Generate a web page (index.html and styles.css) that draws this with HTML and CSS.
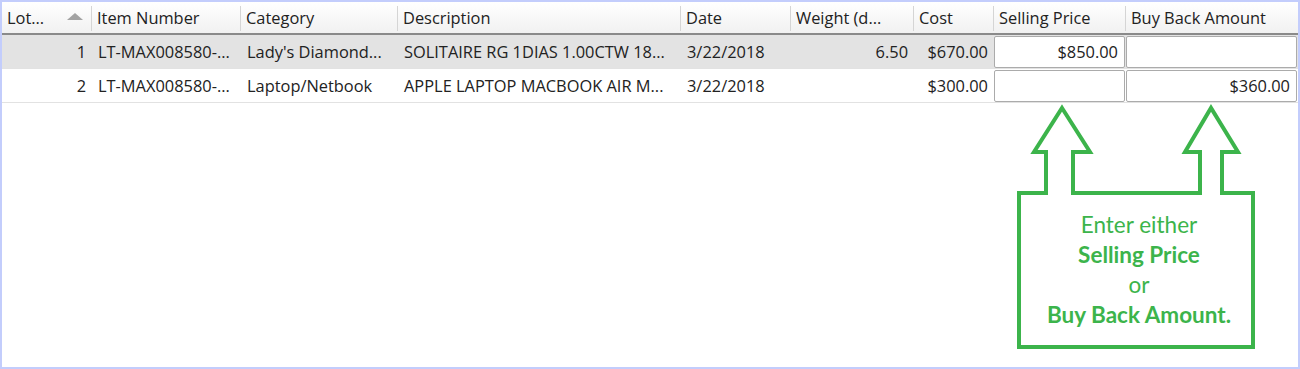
FILE: index.html
```html
<!DOCTYPE html>
<html lang="en">
<head>
    <meta charset="UTF-8">
    <title>Lot Items</title>
    <link rel="stylesheet" href="styles.css">
</head>
<body>
    <div class="frame">
        <div class="grid">
            <div class="head">
                <div class="hcell">Lot...<span class="sort"></span></div>
                <div class="hcell">Item Number</div>
                <div class="hcell">Category</div>
                <div class="hcell">Description</div>
                <div class="hcell">Date</div>
                <div class="hcell">Weight (d...</div>
                <div class="hcell">Cost</div>
                <div class="hcell">Selling Price</div>
                <div class="hcell last">Buy Back Amount</div>
            </div>
            <div class="row selected">
                <div class="cell num">1</div>
                <div class="cell">LT-MAX008580-...</div>
                <div class="cell">Lady's Diamond...</div>
                <div class="cell">SOLITAIRE RG 1DIAS 1.00CTW 18...</div>
                <div class="cell">3/22/2018</div>
                <div class="cell num">6.50</div>
                <div class="cell num">$670.00</div>
                <div class="cell edit"><div class="box">$850.00</div></div>
                <div class="cell edit"><div class="box"></div></div>
            </div>
            <div class="row">
                <div class="cell num">2</div>
                <div class="cell">LT-MAX008580-...</div>
                <div class="cell">Laptop/Netbook</div>
                <div class="cell">APPLE LAPTOP MACBOOK AIR M...</div>
                <div class="cell">3/22/2018</div>
                <div class="cell num"></div>
                <div class="cell num">$300.00</div>
                <div class="cell edit"><div class="box"></div></div>
                <div class="cell edit"><div class="box">$360.00</div></div>
            </div>
        </div>

        <!-- callout drawn over the grid -->
        <div class="callout">
            <svg width="250" height="250" viewBox="1014 104 250 250">
                <path d="M1062 108 L1090 152 L1073 152 L1073 193 L1200 193 L1200 152 L1185 152 L1211 108 L1238 152 L1222 152 L1222 193 L1253 193 L1253 347 L1019 347 L1019 193 L1046 193 L1046 152 L1034 152 Z"
                      fill="none" stroke="#3cb44b" stroke-width="4" stroke-linejoin="miter"/>
            </svg>
            <div class="note">
                <p>Enter either</p>
                <p class="b">Selling Price</p>
                <p>or</p>
                <p class="b">Buy Back Amount.</p>
            </div>
        </div>
    </div>
</body>
</html>
```

FILE: styles.css
```css
body {
    margin: 0;
    padding: 0;
    font-family: 'Open Sans', sans-serif;
    background-color: white;
}
.frame {
    position: relative;
    height: 369px;
    box-sizing: border-box;
    border: 2px solid #c3cdfc;
    background-color: white;
}
.grid {
    color: #222;
    font-size: 16.4px;
}
.head, .row {
    display: grid;
    grid-template-columns: 90px 149px 157px 283px 110px 123px 80px 132px 172px;
}
.head {
    height: 31px;
    background: linear-gradient(#ffffff, #f1f1f1);
    border-bottom: 2px solid #8a8a8a;
}
.hcell {
    position: relative;
    display: flex;
    align-items: center;
    padding-left: 5px;
    padding-bottom: 2px;
    border-right: 1px solid #d5d5d5;
    margin: 4px 0;
    white-space: nowrap;
}
.hcell.last {
    border-right: none;
}
.sort {
    position: absolute;
    right: 8px;
    top: 7px;
    width: 0;
    height: 0;
    border-left: 8px solid transparent;
    border-right: 8px solid transparent;
    border-bottom: 7px solid #a3a3a3;
}
.row {
    height: 34px;
    border-bottom: 1px solid #e2e2e2;
    box-sizing: border-box;
}
.row.selected {
    background-color: #e3e3e3;
}
.cell {
    display: flex;
    align-items: center;
    padding: 0 6px 1px;
    white-space: nowrap;
    overflow: hidden;
}
.cell.num {
    justify-content: flex-end;
}
.cell.edit {
    padding: 0 1px 0 0;
}
.box {
    flex: 1;
    height: 32px;
    box-sizing: border-box;
    background-color: white;
    border: 1px solid #ababab;
    border-radius: 2px;
    display: flex;
    align-items: center;
    justify-content: flex-end;
    padding: 0 6px 1px 0;
}
.callout {
    position: absolute;
    left: 1012px;
    top: 102px;
    width: 250px;
    height: 250px;
}
.callout svg {
    position: absolute;
    left: 0;
    top: 0;
}
.note {
    position: absolute;
    left: 8px;
    top: 106px;
    width: 234px;
    text-align: center;
    color: #3cb44b;
    font-family: Lato, sans-serif;
    font-size: 22.5px;
}
.note p {
    margin: 0;
    line-height: 30px;
}
.note .b {
    font-weight: bold;
}
```
